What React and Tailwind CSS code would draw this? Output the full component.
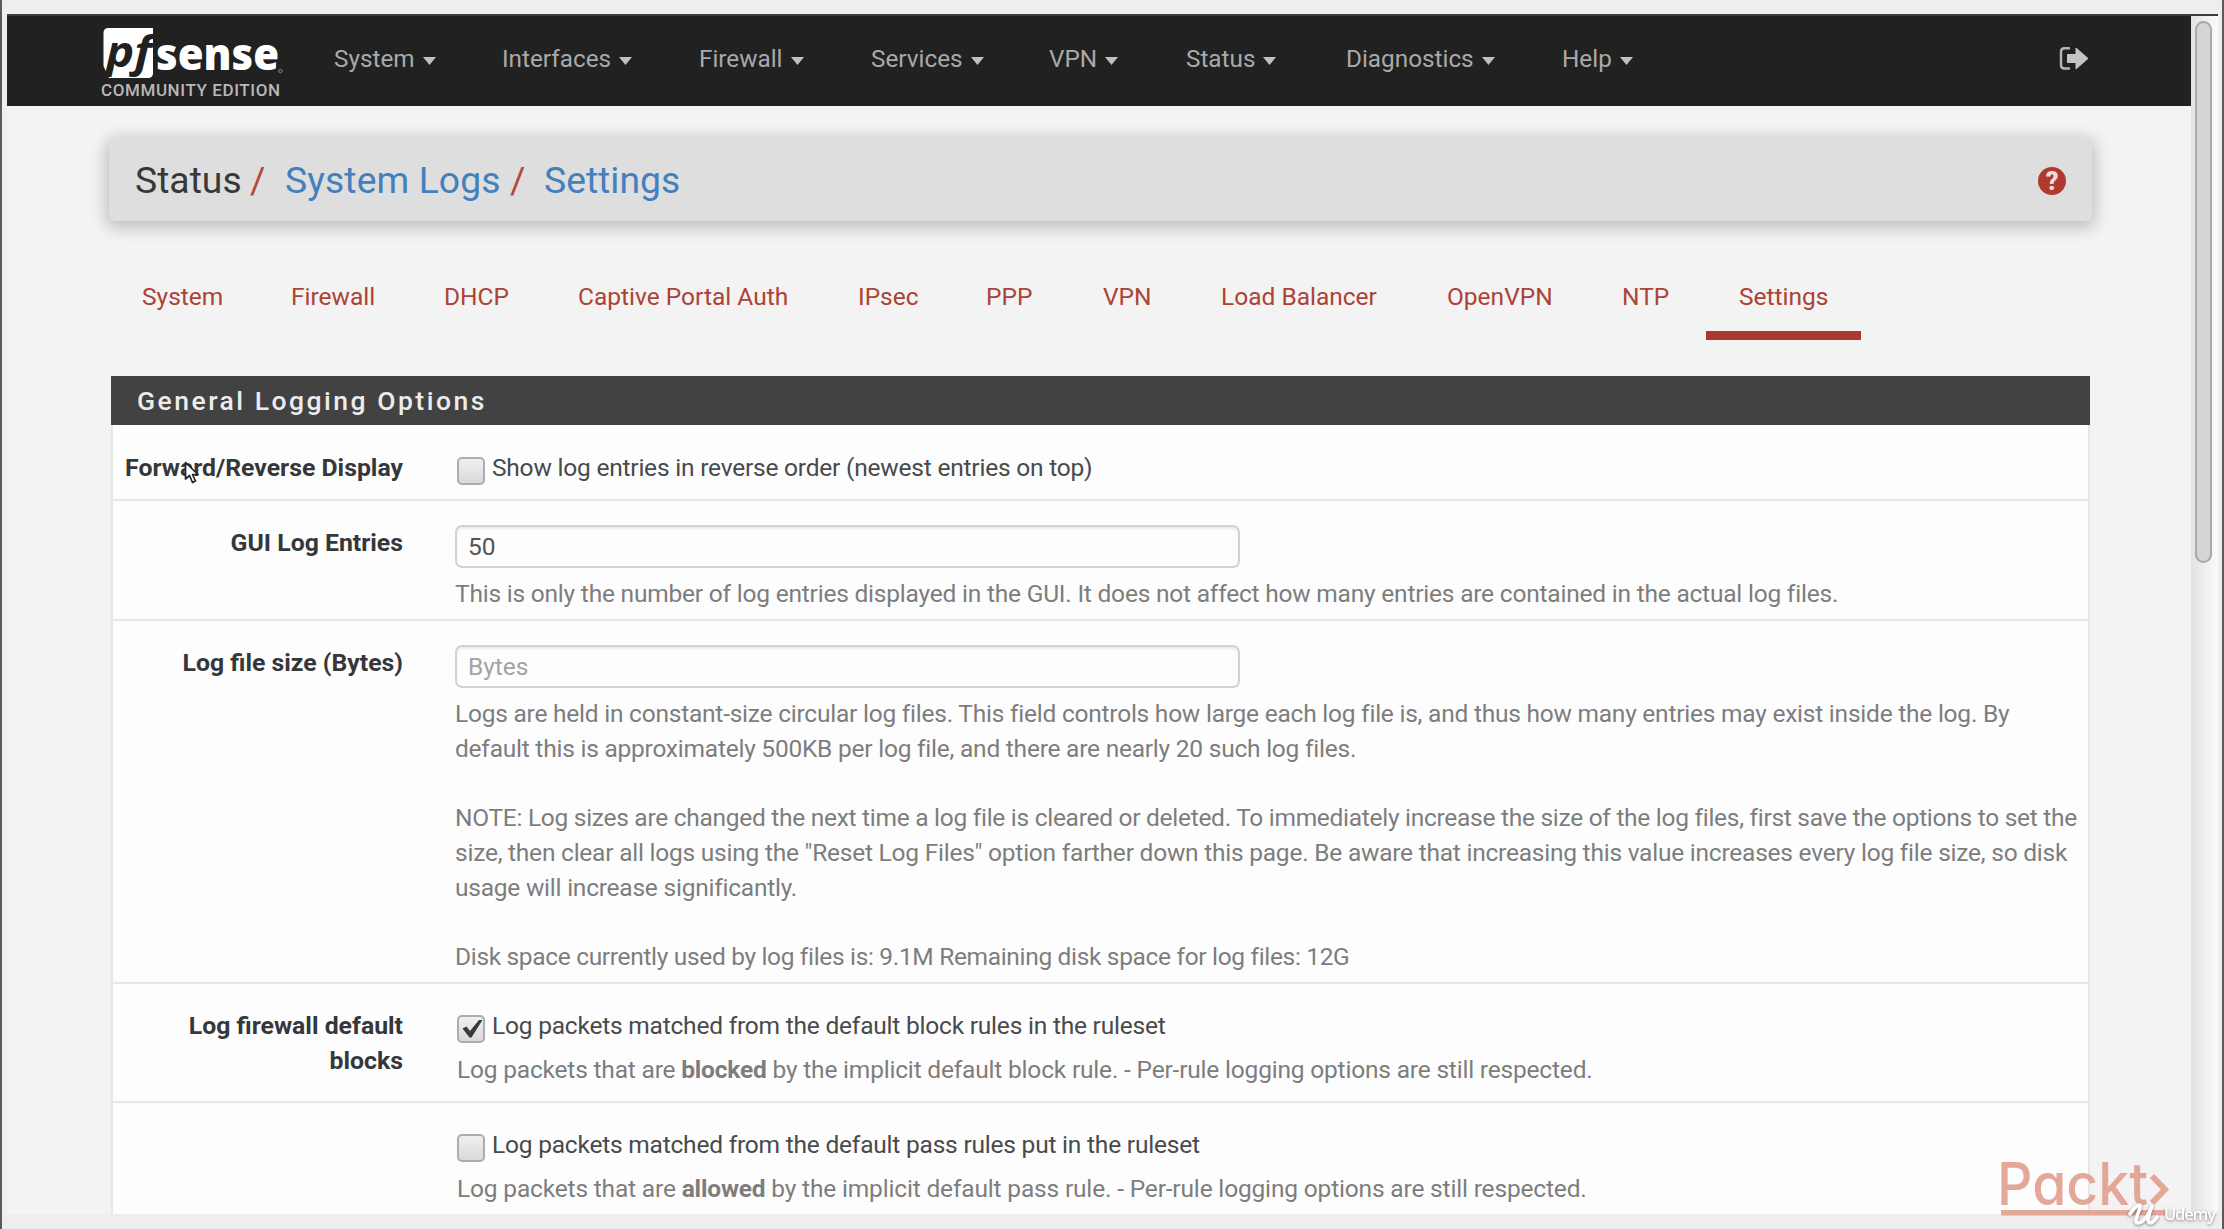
import React from "react";

const navItems = [
  { label: "System", width: "w-[168px]" },
  { label: "Interfaces", width: "w-[197px]" },
  { label: "Firewall", width: "w-[172px]" },
  { label: "Services", width: "w-[178px]" },
  { label: "VPN", width: "w-[137px]" },
  { label: "Status", width: "w-[160px]" },
  { label: "Diagnostics", width: "w-[216px]" },
  { label: "Help", width: "w-[100px]" },
];

const tabs = [
  { label: "System", width: "w-[149px]" },
  { label: "Firewall", width: "w-[153px]" },
  { label: "DHCP", width: "w-[134px]" },
  { label: "Captive Portal Auth", width: "w-[280px]" },
  { label: "IPsec", width: "w-[128px]" },
  { label: "PPP", width: "w-[117px]" },
  { label: "VPN", width: "w-[118px]" },
  { label: "Load Balancer", width: "w-[226px]" },
  { label: "OpenVPN", width: "w-[175px]" },
  { label: "NTP", width: "w-[117px]" },
  { label: "Settings", width: "w-[155px]", active: true },
];

function Logo() {
  return (
    <svg width="190" height="90" viewBox="0 0 190 90" className="shrink-0">
      <path d="M8 12H53V57.500a4.500 4.500 0 0 1-4.500 4.500H9L3.500 50V16.500A4.500 4.500 0 0 1 8 12Z" fill="#fff" />
      <text x="6" y="51" fontFamily="Open Sans" fontWeight="700" fontStyle="italic" fontSize="43" textLength="46" lengthAdjust="spacingAndGlyphs" fill="#212121">pf</text>
      <text x="56" y="53.500" fontFamily="Open Sans" fontWeight="800" fontSize="45" textLength="123" lengthAdjust="spacingAndGlyphs" fill="#fff">sense</text>
      <circle cx="180.500" cy="55" r="1.700" fill="none" stroke="#888" strokeWidth="1" />
      <text x="1" y="80" fontFamily="Roboto" fontWeight="500" fontSize="17" textLength="179" fill="#b8b8b8">COMMUNITY EDITION</text>
    </svg>
  );
}

function Navbar() {
  return (
    <nav className="flex h-[90px] w-[2184px] bg-[#212121] pl-[93px]">
      <Logo />
      <div className="flex pl-[44px] pt-[25px]">
        {navItems.map((n) => (
          <div key={n.label} className={`flex h-[35px] items-center gap-[8px] text-[#a9a9a9] ${n.width}`}>
            <span className="text-[24.3px] leading-[35px]">{n.label}</span>
            <svg width="13" height="8" viewBox="0 0 13 8" className="mt-[4px]">
              <path d="M0 0H13L6.500 8Z" fill="#c0c0c0" />
            </svg>
          </div>
        ))}
      </div>
      <svg width="30" height="25" viewBox="0 0 30 25" className="ml-[397px] mt-[30px]">
        <path d="M10 2.200H5.500Q2 2.200 2 5.700V19Q2 22.500 5.500 22.500H10" fill="none" stroke="#b5b5b5" strokeWidth="2.400" strokeLinecap="round" />
        <path d="M8.500 8.500H17V2L29 12.400L17 23V16.500H8.500Z" fill="#c4c4c4" stroke="#c4c4c4" strokeWidth="1" strokeLinejoin="round" />
      </svg>
    </nav>
  );
}

function Breadcrumb() {
  return (
    <header className="mt-[32px] flex h-[83px] w-[1983px] items-center rounded-[6px] bg-[#dedede] pl-[26px] pr-[26px] text-[37.3px] shadow-[0_4px_16px_3px_rgba(0,0,0,0.22)]">
      <div className="flex flex-1 items-center leading-[50px]">
        <span className="w-[115px] text-[#383838]">Status</span>
        <span className="w-[35px] text-[#b5483a]">/</span>
        <span className="w-[225px] tracking-[0.1px] text-[#4380bd]">System Logs</span>
        <span className="w-[34px] text-[#b5483a]">/</span>
        <span className="text-[#4380bd]">Settings</span>
      </div>
      <span className="mt-[3px] flex size-[28px] items-center justify-center rounded-full bg-[#b03a2e] text-[25px] font-black leading-none text-[#f2dcd9]">?</span>
    </header>
  );
}

function Tabs() {
  return (
    <div className="mt-[56px] flex">
      {tabs.map((t) => (
        <div
          key={t.label}
          className={`h-[63px] border-b-[9px] pl-[33px] pt-[2px] text-[24.5px] leading-[35px] text-[#ad4236] ${t.width} ${
            t.active ? "border-[#a93a2d]" : "border-transparent"
          }`}
        >
          {t.label}
        </div>
      ))}
    </div>
  );
}

function Checkbox({ checked }) {
  return (
    <span className="mt-[6px] flex size-[28px] shrink-0 items-center justify-center rounded-[5px] border-2 border-[#adadad] bg-linear-to-b from-[#f0f0f0] to-[#d9d9d9]">
      {checked && (
        <svg width="24" height="24" viewBox="0 0 24 24">
          <path d="M3.500 11.500L7.500 9.500L11 14L20 3H23.500L12.500 20.500H10.500Z" fill="#3a3a3a" />
        </svg>
      )}
    </span>
  );
}

function CheckLine({ checked, children }) {
  return (
    <div className="flex gap-[7px] pl-[2px] tracking-[-0.21px] text-[#484a4c]">
      <Checkbox checked={checked} />
      <span>{children}</span>
    </div>
  );
}

function Field({ children, muted }) {
  return (
    <div
      className={`-mt-px h-[43px] w-[785px] rounded-[7px] border-2 border-[#d2d2d2] bg-[#fdfdfd] pl-[11px] leading-[40px] shadow-[inset_0_2px_2px_rgba(0,0,0,0.08)] ${
        muted ? "text-[#a3a3a3]" : "text-[#555]"
      }`}
    >
      {children}
    </div>
  );
}

function Row({ label, className, children }) {
  return (
    <section className={`flex border-[#e7e7e7] ${className}`}>
      <div className="w-[290px] shrink-0 text-right text-[24.8px] font-bold text-[#35373a]">{label}</div>
      <div className="ml-[52px] w-[1634px] shrink-0">{children}</div>
    </section>
  );
}

function Help({ className, children }) {
  return <p className={`whitespace-nowrap text-[#7d7d7d] ${className}`}>{children}</p>;
}

function Panel() {
  return (
    <main className="mt-[36px] w-[1979px]">
      <h2 className="h-[49px] bg-[#424242] pl-[26px] text-[26.5px] font-medium leading-[50px] tracking-[2.5px] text-[#ececec]">
        General Logging Options
      </h2>
      <div className="w-[1979px] border-x-2 border-[#e7e7e7] bg-[#fdfdfd] text-[24.5px] leading-[34.7px]">
        <Row label={<span className="-ml-2 whitespace-nowrap">Forward/Reverse Display</span>} className="h-[76px] border-b-2 pt-[26px]">
          <CheckLine>Show log entries in reverse order (newest entries on top)</CheckLine>
        </Row>
        <Row label="GUI Log Entries" className="h-[120px] border-b-2 pt-[25px]">
          <Field>50</Field>
          <Help className="mt-[9px] tracking-[-0.21px]">
            This is only the number of log entries displayed in the GUI. It does not affect how many entries are contained in the actual log files.
          </Help>
        </Row>
        <Row label="Log file size (Bytes)" className="h-[363px] border-b-2 pt-[25px]">
          <Field muted>Bytes</Field>
          <Help className="mt-[9px] tracking-[-0.23px]">
            Logs are held in constant-size circular log files. This field controls how large each log file is, and thus how many entries may exist inside the log. By
            <br />
            default this is approximately 500KB per log file, and there are nearly 20 such log files.
            <br />
            <br />
            <span className="tracking-[-0.28px]">
              NOTE: Log sizes are changed the next time a log file is cleared or deleted. To immediately increase the size of the log files, first save the options to set the
            </span>
            <br />
            size, then clear all logs using the "Reset Log Files" option farther down this page. Be aware that increasing this value increases every log file size, so disk
            <br />
            usage will increase significantly.
            <br />
            <br />
            <span className="tracking-[-0.33px]">Disk space currently used by log files is: 9.1M Remaining disk space for log files: 12G</span>
          </Help>
        </Row>
        <Row label={<>Log firewall default<br />blocks</>} className="h-[119px] border-b-2 pt-[25px]">
          <CheckLine checked>Log packets matched from the default block rules in the ruleset</CheckLine>
          <Help className="mt-[9px] pl-[2px] tracking-[-0.19px]">
            Log packets that are <b>blocked</b> by the implicit default block rule. - Per-rule logging options are still respected.
          </Help>
        </Row>
        <Row label="" className="h-[111px] pt-[25px]">
          <CheckLine>Log packets matched from the default pass rules put in the ruleset</CheckLine>
          <Help className="mt-[9px] pl-[2px] tracking-[-0.17px]">
            Log packets that are <b>allowed</b> by the implicit default pass rule. - Per-rule logging options are still respected.
          </Help>
        </Row>
      </div>
    </main>
  );
}

function Watermarks() {
  return (
    <svg width="244" height="84" viewBox="1980 1145 244 84" className="absolute -right-[2px] bottom-0">
      <g opacity="0.85">
        <text x="1997" y="1204.500" fontFamily="Inter" fontWeight="500" fontSize="59" textLength="151" lengthAdjust="spacingAndGlyphs" fill="#e09a88" style={{ fontFeatureSettings: "'cv11'" }}>Packt</text>
        <path d="M2152 1176L2165 1189.500L2152 1203" fill="none" stroke="#e09a88" strokeWidth="6" />
        <rect x="2001" y="1210" width="164" height="5.500" fill="#e09a88" />
      </g>
      <g style={{ filter: "drop-shadow(0 1px 1.500px rgba(0,0,0,.45))" }}>
        <path d="M2130 1214Q2136 1205 2140 1205C2141 1211 2132 1222 2138 1223C2144 1223 2150 1212 2152 1206C2149 1214 2146 1222 2150 1223Q2153 1223 2157 1217" fill="none" stroke="#fff" strokeWidth="3.600" strokeLinecap="round" strokeLinejoin="round" />
        <text x="2164" y="1220" fontFamily="Open Sans" fontWeight="600" fontSize="16.500" textLength="52" fill="#fff">Udemy</text>
      </g>
    </svg>
  );
}

export default function App() {
  return (
    <div className="relative flex h-[1229px] w-[2224px] overflow-hidden border-l-2 border-r-2 border-[#5a5a5a] bg-[#eeeeee] font-[Roboto,sans-serif] text-[24.5px]">
      <div className="ml-[5px] mt-[14px] h-[1200px] w-[2211px] shrink-0 overflow-hidden border-t-2 border-[#3a3a3a]">
        <div className="flex h-full">
          <div className="w-[2184px] shrink-0 bg-[#f3f3f3]">
            <Navbar />
            <div className="pl-[102px]">
              <Breadcrumb />
              <Tabs />
              <div className="pl-[2px]">
                <Panel />
              </div>
            </div>
          </div>
          <aside className="w-[27px] bg-linear-to-r from-[#e2e2e2] to-[#fbfbfb] pl-[4px] pt-[5px]">
            <div className="h-[542px] w-[17px] rounded-full border-2 border-[#a9a9a9] bg-[#d5d5d5]" />
          </aside>
        </div>
      </div>
      <svg width="16" height="24" viewBox="0 0 16 24" className="absolute left-[182px] top-[461px]">
        <path d="M1.500 1.500V18L5.500 14.500L8.500 21.500L11.500 20L8.500 13.500H14Z" fill="#fff" stroke="#222" strokeWidth="1.700" strokeLinejoin="round" />
      </svg>
      <Watermarks />
    </div>
  );
}
